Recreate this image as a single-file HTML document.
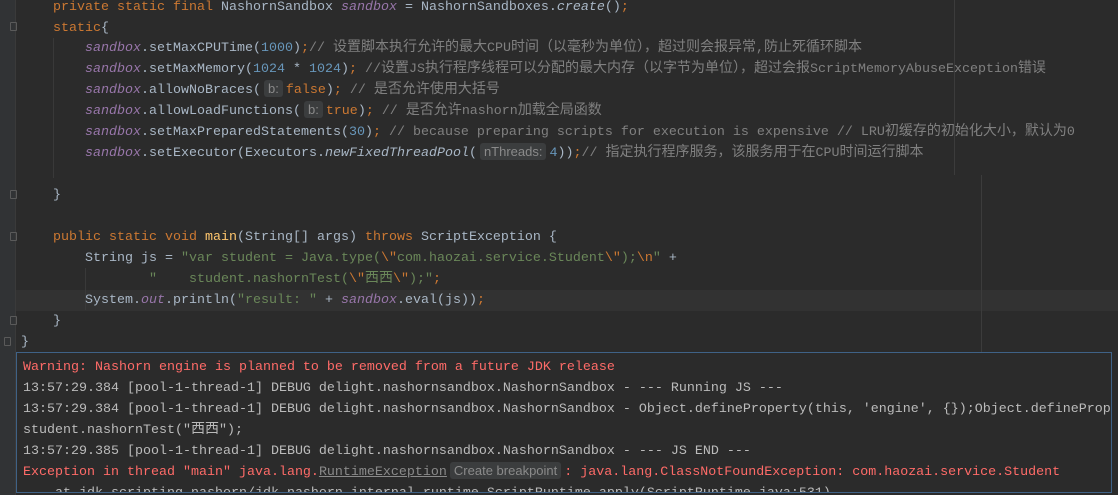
<!DOCTYPE html>
<html><head><meta charset="utf-8"><style>
html,body{margin:0;padding:0;width:1118px;height:495px;overflow:hidden;background:#2b2b2b;}
body{position:relative;font-family:"Liberation Mono","Noto Sans CJK SC",monospace;font-size:13.33px;color:#a9b7c6;}
.gut{position:absolute;left:0;top:0;width:15px;height:495px;background:#313335;border-right:1px solid #3a3a3a;}
.l{position:absolute;left:0;height:21px;line-height:21px;white-space:pre;}
.k{color:#cc7832}.f{color:#9876aa;font-style:italic}.n{color:#6897bb}.c{color:#808080}.s{color:#6a8759}.m{color:#ffc66d}.i{font-style:italic}
.z{font-family:"Noto Sans CJK SC",sans-serif;font-weight:normal;font-size:14px;line-height:0;}
.h{display:inline-block;background:#3b3d3e;color:#8a8a8a;border-radius:3px;font-family:"Liberation Sans",sans-serif;font-size:13px;line-height:17px;height:17px;padding:0 4px;margin:0 3px;vertical-align:top;position:relative;top:0;}
.cur{position:absolute;left:16px;right:0;top:290px;height:21px;background:#323232;}
.guide{position:absolute;width:1px;background:#3c3c3c;}
.ind{position:absolute;width:1px;background:#393939;}
.fold{position:absolute;left:10px;width:7px;height:9px;border:1px solid #5a5a5a;border-radius:1px;box-sizing:border-box;}
.con{position:absolute;left:16px;top:352px;width:1096px;height:141px;border:1px solid #3f6287;background:#2b2b2b;overflow:hidden;box-sizing:border-box;}
.con .l{left:6px;color:#bbbbbb;font-size:13.33px}
.r{color:#ff6b68!important}
.u{color:#8a8a8a;text-decoration:underline}
</style></head><body>
<div class="gut"></div>
<div class="cur"></div>
<div class="guide" style="left:954px;top:0;height:175px"></div>
<div class="guide" style="left:981px;top:175px;height:177px"></div>
<div class="ind" style="left:53px;top:38px;height:140px"></div>
<div class="ind" style="left:85px;top:268px;height:42px"></div>
<div class="fold" style="top:22px"></div>
<div class="fold" style="top:190px"></div>
<div class="fold" style="top:232px"></div>
<div class="fold" style="top:316px"></div>
<div class="fold" style="top:337px;left:4px"></div>

<div class="l" style="top:-3px;left:53px"><span class="k">private static final </span>NashornSandbox <span class="f">sandbox</span> = NashornSandboxes.<span class="i">create</span>()<span class="k">;</span></div>
<div class="l" style="top:18px;left:53px"><span class="k">static</span>{</div>
<div class="l" style="top:38px;left:85px"><span class="f">sandbox</span>.setMaxCPUTime(<span class="n">1000</span>)<span class="k">;</span><span class="c">// <b class="z">设置脚本执行允许的最大</b>CPU<b class="z">时间（以毫秒为单位），超过则会报异常</b>,<b class="z">防止死循环脚本</b></span></div>
<div class="l" style="top:59px;left:85px"><span class="f">sandbox</span>.setMaxMemory(<span class="n">1024</span> * <span class="n">1024</span>)<span class="k">;</span> <span class="c">//<b class="z">设置</b>JS<b class="z">执行程序线程可以分配的最大内存（以字节为单位），超过会报</b>ScriptMemoryAbuseException<b class="z">错误</b></span></div>
<div class="l" style="top:80px;left:85px"><span class="f">sandbox</span>.allowNoBraces(<span class="h">b:</span><span class="k">false</span>)<span class="k">;</span> <span class="c">// <b class="z">是否允许使用大括号</b></span></div>
<div class="l" style="top:101px;left:85px"><span class="f">sandbox</span>.allowLoadFunctions(<span class="h">b:</span><span class="k">true</span>)<span class="k">;</span> <span class="c">// <b class="z">是否允许</b>nashorn<b class="z">加载全局函数</b></span></div>
<div class="l" style="top:122px;left:85px"><span class="f">sandbox</span>.setMaxPreparedStatements(<span class="n">30</span>)<span class="k">;</span> <span class="c">// because preparing scripts for execution is expensive // LRU<b class="z">初缓存的初始化大小，默认为</b>0</span></div>
<div class="l" style="top:143px;left:85px"><span class="f">sandbox</span>.setExecutor(Executors.<span class="i">newFixedThreadPool</span>(<span class="h">nThreads:</span><span class="n">4</span>))<span class="k">;</span><span class="c">// <b class="z">指定执行程序服务，该服务用于在</b>CPU<b class="z">时间运行脚本</b></span></div>
<div class="l" style="top:185px;left:53px">}</div>
<div class="l" style="top:227px;left:53px"><span class="k">public static void </span><span class="m">main</span>(String[] args) <span class="k">throws </span>ScriptException {</div>
<div class="l" style="top:248px;left:85px">String js = <span class="s">"var student = Java.type(</span><span class="k">\"</span><span class="s">com.haozai.service.Student</span><span class="k">\"</span><span class="s">);</span><span class="k">\n</span><span class="s">" </span>+</div>
<div class="l" style="top:269px;left:85px"><span class="s">        "    student.nashornTest(</span><span class="k">\"</span><span class="s"><b class="z">西西</b></span><span class="k">\"</span><span class="s">);"</span><span class="k">;</span></div>
<div class="l" style="top:290px;left:85px">System.<span class="f">out</span>.println(<span class="s">"result: " </span>+ <span class="f">sandbox</span>.eval(js))<span class="k">;</span></div>
<div class="l" style="top:311px;left:53px">}</div>
<div class="l" style="top:332px;left:21px">}</div>

<div class="con">
<div class="l r" style="top:4px">Warning: Nashorn engine is planned to be removed from a future JDK release</div>
<div class="l" style="top:25px">13:57:29.384 [pool-1-thread-1] DEBUG delight.nashornsandbox.NashornSandbox - --- Running JS ---</div>
<div class="l" style="top:46px">13:57:29.384 [pool-1-thread-1] DEBUG delight.nashornsandbox.NashornSandbox - Object.defineProperty(this, 'engine', {});Object.defineProp</div>
<div class="l" style="top:67px">student.nashornTest("<b class="z">西西</b>");</div>
<div class="l" style="top:88px">13:57:29.385 [pool-1-thread-1] DEBUG delight.nashornsandbox.NashornSandbox - --- JS END ---</div>
<div class="l r" style="top:109px">Exception in thread "main" java.lang.<span class="u">RuntimeException</span><span class="h">Create breakpoint</span>: java.lang.ClassNotFoundException: com.haozai.service.Student</div>
<div class="l" style="top:130px;color:#bbb">    at jdk.scripting.nashorn/jdk.nashorn.internal.runtime.ScriptRuntime.apply(ScriptRuntime.java:531)</div>
</div>
</body></html>
